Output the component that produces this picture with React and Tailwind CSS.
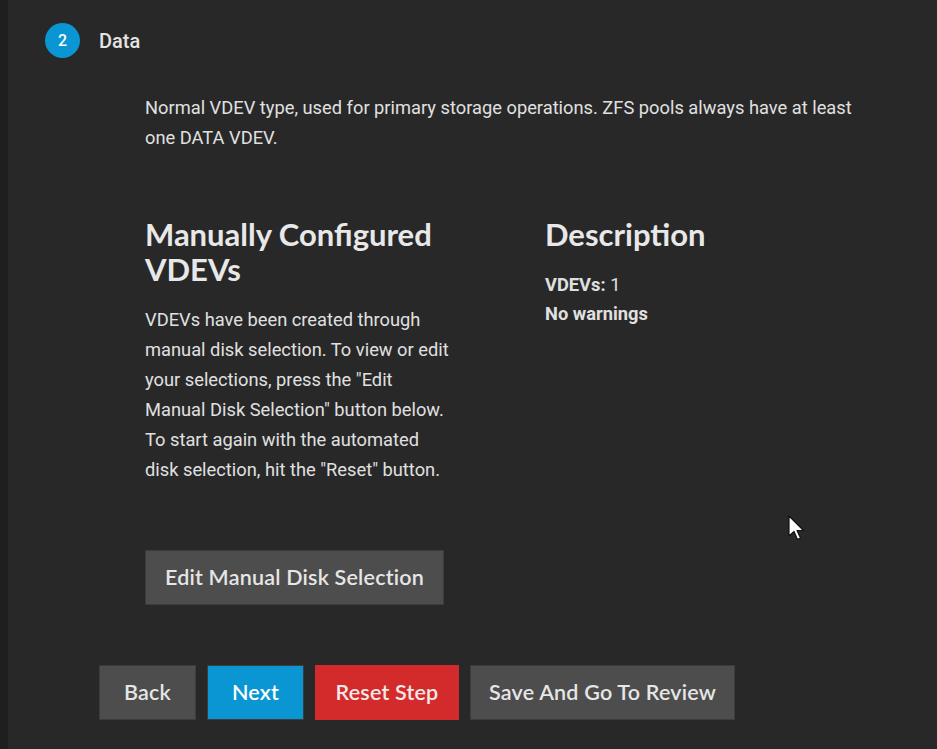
const HEAD = { fontFamily: '"Lato", "Open Sans", sans-serif' };
const BODY = { fontFamily: 'Roboto, "Noto Sans", sans-serif' };

function Btn({ children, className = '' }) {
  return (
    <button
      className={`h-[55px] border border-[#3c3c3c] px-4 text-[21.5px] font-semibold tracking-[0.2px] text-[#e6e6e6] ${className}`}
      style={HEAD}
    >
      {children}
    </button>
  );
}

function Cursor() {
  return (
    <svg
      className="pointer-events-none absolute left-[788px] top-[515px]"
      width="20"
      height="28"
      viewBox="0 0 20 28"
    >
      <path
        d="M1 1 L1 21 L6 16.5 L9.5 24.5 L12.5 23 L9 15.5 L15.5 15.5 Z"
        fill="#ffffff"
        stroke="#111111"
        strokeWidth="1.2"
        strokeLinejoin="round"
      />
    </svg>
  );
}

export default function App() {
  return (
    <div className="relative flex min-h-[749px] w-full bg-[#282828]" style={BODY}>
      <div className="w-2 shrink-0 bg-[#1f1f1f]" />
      <div className="flex flex-1 flex-col pl-[37px] pt-[23px]">
        <div className="flex items-center gap-[19px]">
          <div className="flex h-[35px] w-[35px] items-center justify-center rounded-full bg-[#0a95d3] text-[16px] font-medium text-white">
            2
          </div>
          <div className="text-[20px] font-medium text-[#e4e4e4]">Data</div>
        </div>

        <div className="ml-[100px] mt-[35px] w-[740px] text-[18.3px] leading-[30px] text-[#e0e0e0]">
          Normal VDEV type, used for primary storage operations. ZFS pools always have at least
          <br />
          one DATA VDEV.
        </div>

        <div className="ml-[100px] mt-[64px] flex">
          <div className="w-[400px]">
            <h2
              className="w-[320px] text-[31px] font-bold leading-[35px] text-[#e8e8e8]"
              style={HEAD}
            >
              Manually Configured VDEVs
            </h2>
            <p className="mt-[18px] text-[18.3px] leading-[30px] text-[#e0e0e0]">
              VDEVs have been created through
              <br />
              manual disk selection. To view or edit
              <br />
              your selections, press the "Edit
              <br />
              Manual Disk Selection" button below.
              <br />
              To start again with the automated
              <br />
              disk selection, hit the "Reset" button.
            </p>
          </div>
          <div>
            <h2 className="text-[31px] font-bold leading-[35px] text-[#e8e8e8]" style={HEAD}>
              Description
            </h2>
            <div className="mt-[18px] text-[18.3px] leading-[29px] text-[#e0e0e0]">
              <div>
                <span className="font-bold">VDEVs:</span> 1
              </div>
              <div className="font-bold">No warnings</div>
            </div>
          </div>
        </div>

        <div className="ml-[100px] mt-[65px]">
          <Btn className="w-[299px] bg-[#4d4d4d]">Edit Manual Disk Selection</Btn>
        </div>

        <div className="ml-[54px] mt-[60px] flex gap-[11px]">
          <Btn className="w-[97px] bg-[#4d4d4d]">Back</Btn>
          <Btn className="w-[97px] border-[#0a95d3] bg-[#0a95d3] text-white">Next</Btn>
          <Btn className="w-[144px] border-[#d32b2b] bg-[#d32b2b] text-[#f4e8e8]">Reset Step</Btn>
          <Btn className="w-[265px] bg-[#4d4d4d]">Save And Go To Review</Btn>
        </div>
      </div>
      <Cursor />
    </div>
  );
}
